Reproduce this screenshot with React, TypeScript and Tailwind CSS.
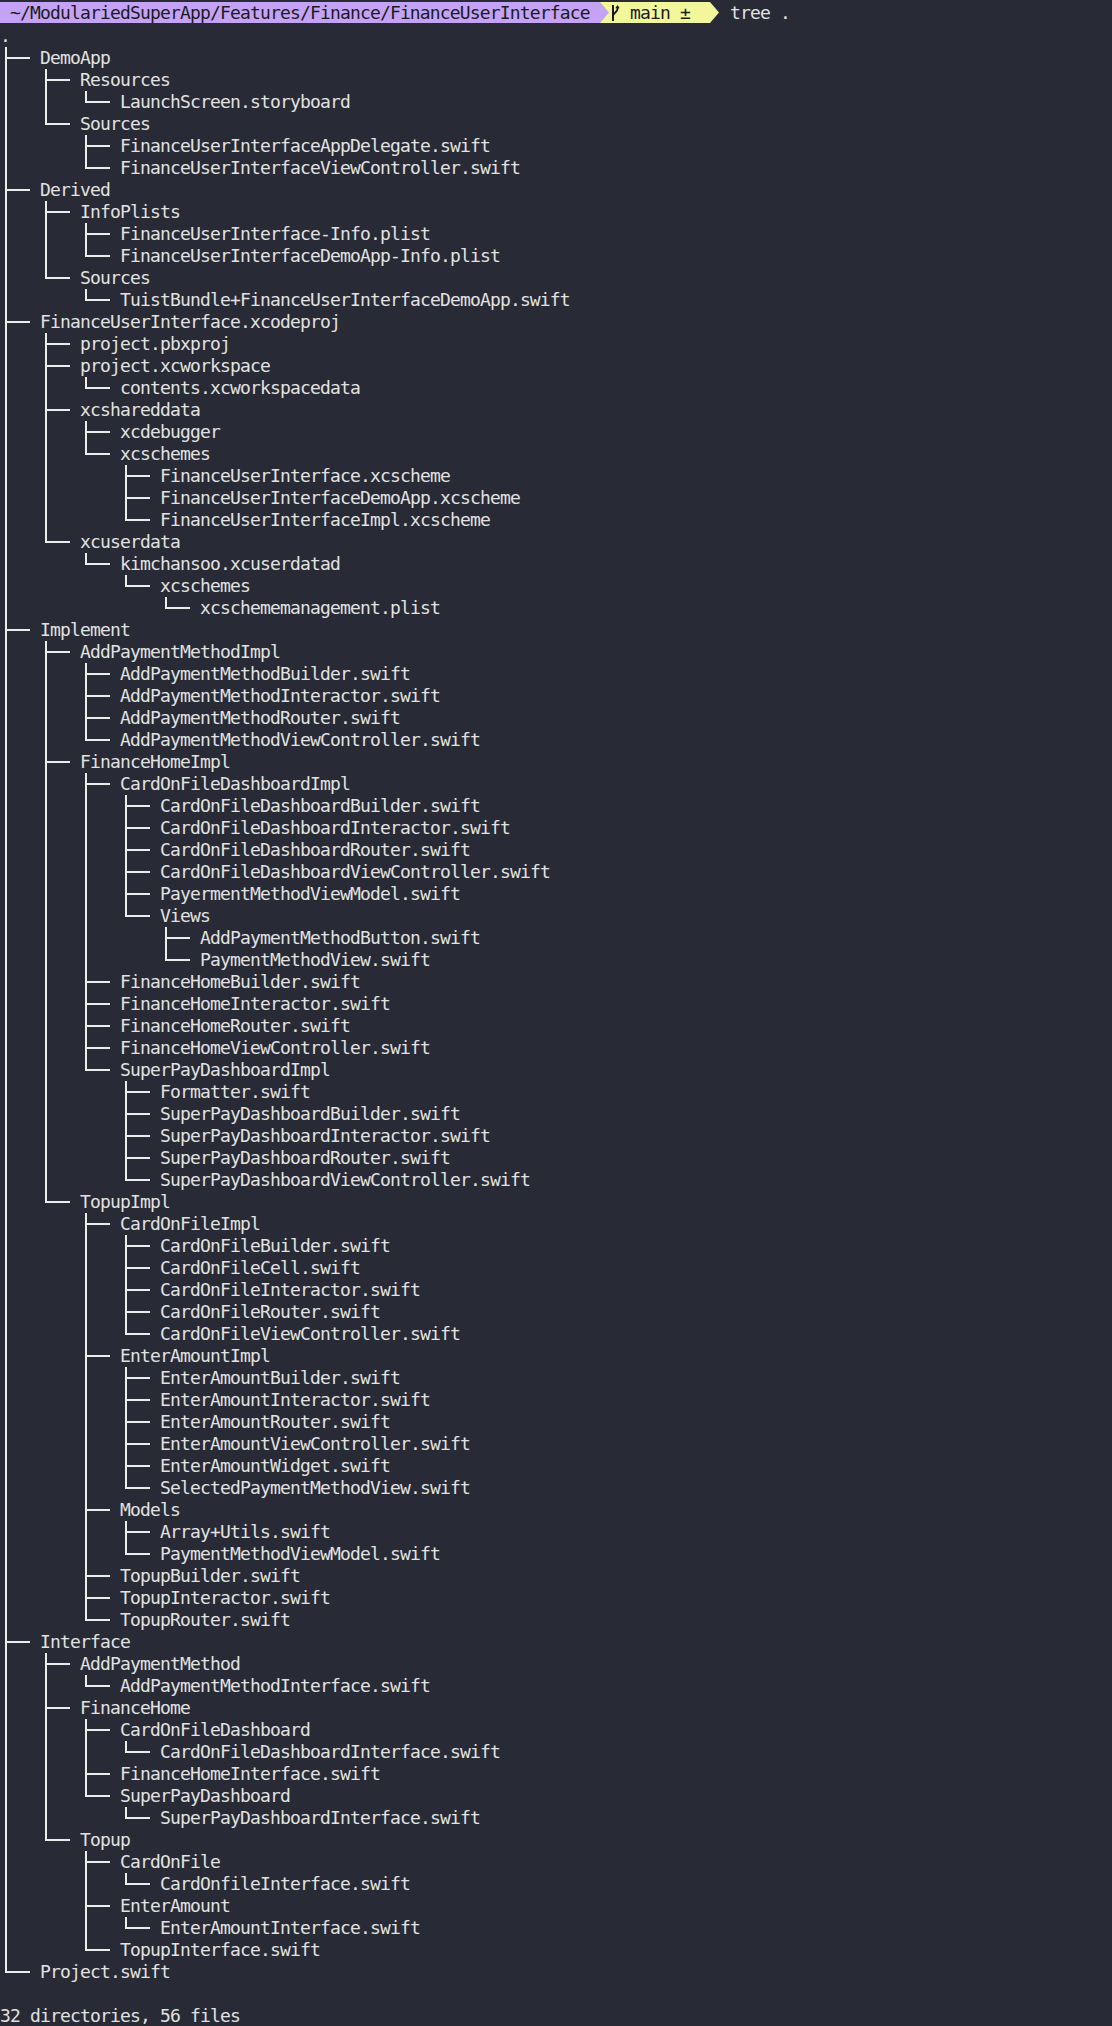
import React from "react";

type Node = { name: string; children?: Node[] };

const d = (name: string, children: Node[]): Node => ({ name, children });
const f = (name: string): Node => ({ name });

const tree: Node[] = [
  d("DemoApp", [
    d("Resources", [f("LaunchScreen.storyboard")]),
    d("Sources", [
      f("FinanceUserInterfaceAppDelegate.swift"),
      f("FinanceUserInterfaceViewController.swift"),
    ]),
  ]),
  d("Derived", [
    d("InfoPlists", [
      f("FinanceUserInterface-Info.plist"),
      f("FinanceUserInterfaceDemoApp-Info.plist"),
    ]),
    d("Sources", [f("TuistBundle+FinanceUserInterfaceDemoApp.swift")]),
  ]),
  d("FinanceUserInterface.xcodeproj", [
    f("project.pbxproj"),
    d("project.xcworkspace", [f("contents.xcworkspacedata")]),
    d("xcshareddata", [
      f("xcdebugger"),
      d("xcschemes", [
        f("FinanceUserInterface.xcscheme"),
        f("FinanceUserInterfaceDemoApp.xcscheme"),
        f("FinanceUserInterfaceImpl.xcscheme"),
      ]),
    ]),
    d("xcuserdata", [
      d("kimchansoo.xcuserdatad", [
        d("xcschemes", [f("xcschememanagement.plist")]),
      ]),
    ]),
  ]),
  d("Implement", [
    d("AddPaymentMethodImpl", [
      f("AddPaymentMethodBuilder.swift"),
      f("AddPaymentMethodInteractor.swift"),
      f("AddPaymentMethodRouter.swift"),
      f("AddPaymentMethodViewController.swift"),
    ]),
    d("FinanceHomeImpl", [
      d("CardOnFileDashboardImpl", [
        f("CardOnFileDashboardBuilder.swift"),
        f("CardOnFileDashboardInteractor.swift"),
        f("CardOnFileDashboardRouter.swift"),
        f("CardOnFileDashboardViewController.swift"),
        f("PayermentMethodViewModel.swift"),
        d("Views", [
          f("AddPaymentMethodButton.swift"),
          f("PaymentMethodView.swift"),
        ]),
      ]),
      f("FinanceHomeBuilder.swift"),
      f("FinanceHomeInteractor.swift"),
      f("FinanceHomeRouter.swift"),
      f("FinanceHomeViewController.swift"),
      d("SuperPayDashboardImpl", [
        f("Formatter.swift"),
        f("SuperPayDashboardBuilder.swift"),
        f("SuperPayDashboardInteractor.swift"),
        f("SuperPayDashboardRouter.swift"),
        f("SuperPayDashboardViewController.swift"),
      ]),
    ]),
    d("TopupImpl", [
      d("CardOnFileImpl", [
        f("CardOnFileBuilder.swift"),
        f("CardOnFileCell.swift"),
        f("CardOnFileInteractor.swift"),
        f("CardOnFileRouter.swift"),
        f("CardOnFileViewController.swift"),
      ]),
      d("EnterAmountImpl", [
        f("EnterAmountBuilder.swift"),
        f("EnterAmountInteractor.swift"),
        f("EnterAmountRouter.swift"),
        f("EnterAmountViewController.swift"),
        f("EnterAmountWidget.swift"),
        f("SelectedPaymentMethodView.swift"),
      ]),
      d("Models", [
        f("Array+Utils.swift"),
        f("PaymentMethodViewModel.swift"),
      ]),
      f("TopupBuilder.swift"),
      f("TopupInteractor.swift"),
      f("TopupRouter.swift"),
    ]),
  ]),
  d("Interface", [
    d("AddPaymentMethod", [f("AddPaymentMethodInterface.swift")]),
    d("FinanceHome", [
      d("CardOnFileDashboard", [f("CardOnFileDashboardInterface.swift")]),
      f("FinanceHomeInterface.swift"),
      d("SuperPayDashboard", [f("SuperPayDashboardInterface.swift")]),
    ]),
    d("Topup", [
      d("CardOnFile", [f("CardOnfileInterface.swift")]),
      d("EnterAmount", [f("EnterAmountInterface.swift")]),
      f("TopupInterface.swift"),
    ]),
  ]),
  f("Project.swift"),
];

type Cell = "pipe" | "tee" | "corner" | "blank";
type Row = { cells: Cell[]; name: string };

function flatten(nodes: Node[], ancestorsLast: boolean[], out: Row[]) {
  nodes.forEach((n, i) => {
    const last = i === nodes.length - 1;
    const cells: Cell[] = ancestorsLast.map((l) => (l ? "blank" : "pipe"));
    cells.push(last ? "corner" : "tee");
    out.push({ cells, name: n.name });
    if (n.children) flatten(n.children, [...ancestorsLast, last], out);
  });
}

const rows: Row[] = [];
flatten(tree, [], rows);

function Connector({ type }: { type: Cell }) {
  if (type === "blank") return <div className="w-[40px] h-full shrink-0" />;
  if (type === "pipe")
    return (
      <div className="w-[40px] h-full shrink-0 flex">
        <div className="ml-[5px] w-[2px] h-full bg-[#ececea]" />
      </div>
    );
  return (
    <div className="w-[40px] h-full shrink-0 flex items-start">
      <div
        className={
          type === "tee"
            ? "ml-[5px] w-[2px] h-full bg-[#ececea]"
            : "ml-[5px] w-[2px] h-[12px] bg-[#ececea]"
        }
      />
      <div className="mt-[10px] w-[23px] h-[2px] bg-[#ececea]" />
    </div>
  );
}

function BranchIcon() {
  return (
    <svg width="10" height="18" viewBox="0 0 10 18" className="shrink-0">
      <path d="M3 1 V17" stroke="#1b1b1b" strokeWidth="2" fill="none" />
      <path
        d="M7.5 3 V5 C7.5 8 3 9 3 12"
        stroke="#1b1b1b"
        strokeWidth="2"
        fill="none"
      />
      <path d="M5.3 4.2 L7.5 1 L9.7 4.2 Z" fill="#1b1b1b" />
    </svg>
  );
}

export default function App() {
  return (
    <div
      className="min-h-screen w-full bg-[#282a36] text-[#e2e2e0] pt-[2px] text-[18px] tracking-[-0.84px] leading-[22px]"
      style={{ fontFamily: '"DejaVu Sans Mono", "Liberation Mono", monospace' }}
    >
      {/* prompt */}
      <div className="flex items-stretch h-[21px] mb-[2px]">
        <div className="w-[600px] bg-[#c4a3f6] text-[#1b1b1b] flex items-center whitespace-pre leading-[21px]">
          {" ~/ModulariedSuperApp/Features/Finance/FinanceUserInterface"}
        </div>
        <svg width="10" height="21" viewBox="0 0 10 21" className="shrink-0 bg-[#f3f79b]">
          <path d="M0 0 L9 10.5 L0 21 Z" fill="#c4a3f6" />
        </svg>
        <div className="w-[100px] bg-[#f3f79b] text-[#1b1b1b] flex items-center whitespace-pre leading-[21px]">
          <BranchIcon />
          <span>{" main ± "}</span>
        </div>
        <svg width="10" height="21" viewBox="0 0 10 21" className="shrink-0">
          <path d="M0 0 L9 10.5 L0 21 Z" fill="#f3f79b" />
        </svg>
        <div className="whitespace-pre pl-[10px] leading-[21px]">tree .</div>
      </div>

      <div className="h-[22px] whitespace-pre">.</div>
      {rows.map((r, i) => (
        <div key={i} className="flex h-[22px] items-stretch">
          {r.cells.map((c, j) => (
            <Connector key={j} type={c} />
          ))}
          <span className="whitespace-pre leading-[22px]">{r.name}</span>
        </div>
      ))}
      <div className="h-[22px]" />
      <div className="h-[22px] whitespace-pre">32 directories, 56 files</div>
    </div>
  );
}
